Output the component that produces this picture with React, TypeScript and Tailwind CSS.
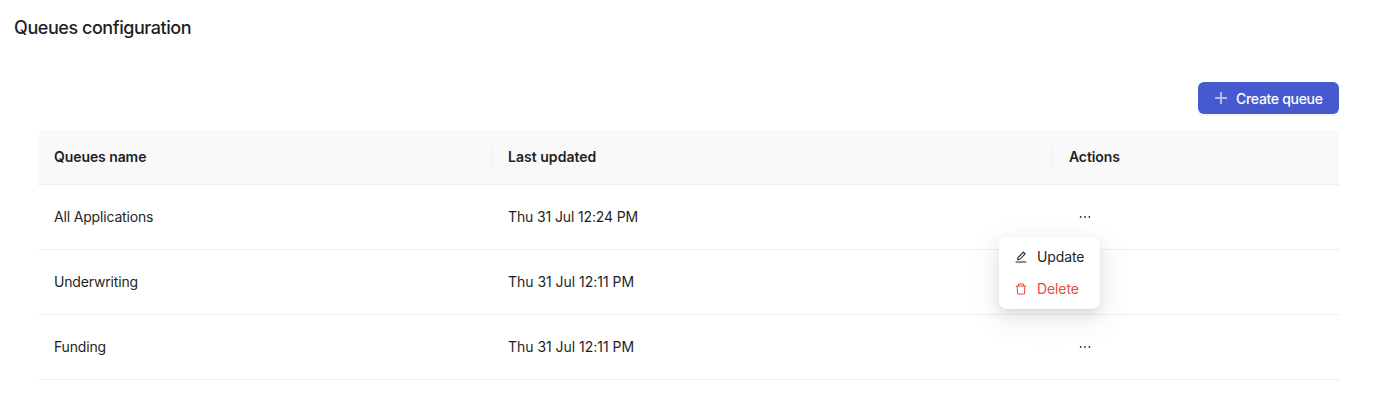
import { AiOutlineDelete, AiOutlineEdit, AiOutlineEllipsis } from "react-icons/ai";

const rows = [
  { name: "All Applications", updated: "Thu 31 Jul 12:24 PM", spacing: "tracking-[-0.13px]" },
  { name: "Underwriting", updated: "Thu 31 Jul 12:11 PM", spacing: "tracking-[-0.03px]" },
  { name: "Funding", updated: "Thu 31 Jul 12:11 PM", spacing: "tracking-[-0.03px]" },
];

function ActionsMenu() {
  return (
    <div className="absolute left-[-54px] top-[52px] z-10 w-[101px] rounded-lg bg-white p-1 shadow-[0_6px_16px_0_rgba(0,0,0,0.08),0_3px_6px_-4px_rgba(0,0,0,0.12),0_9px_28px_8px_rgba(0,0,0,0.05)]">
      <button className="flex h-8 w-full items-center gap-[9px] px-[11px] tracking-[-0.1px] text-[#1f1f1f]">
        <AiOutlineEdit size={14} className="shrink-0" />
        Update
      </button>
      <button className="flex h-8 w-full items-center gap-[9px] px-[11px] tracking-[-0.1px] text-[#e84a40]">
        <AiOutlineDelete size={14} className="shrink-0" />
        Delete
      </button>
    </div>
  );
}

export default function App() {
  return (
    <main className="h-[410px] overflow-hidden bg-white font-['Inter',sans-serif] text-sm text-[#1f1f1f]">
      <h1 className="px-[14px] pt-[14px] text-lg leading-7 font-medium tracking-[-0.45px]">Queues configuration</h1>
      <div className="mt-10 pr-[37px] pl-[38px]">
        <div className="flex justify-end">
          <button className="flex h-8 w-[141px] items-center gap-[7px] rounded-md bg-[#4659cf] pl-[15px] text-white shadow-[0_2px_0_rgba(5,80,255,0.06)]">
            <svg width="16" height="16" viewBox="0 0 16 16" fill="none" className="shrink-0">
              <path d="M8 2v12M2 8h12" stroke="currentColor" strokeOpacity="0.58" strokeWidth="2" />
            </svg>
            <span className="pt-[2px] font-medium tracking-[-0.3px]">Create queue</span>
          </button>
        </div>
        <div className="mt-4">
          <div className="grid h-[55px] grid-cols-[454px_561px_1fr] items-center rounded-t-lg border-b border-[#eeeeee] bg-[#f9f9f9] font-semibold">
            <div className="flex h-[22px] items-center border-r border-[#eeeeee] pl-4 tracking-[-0.08px]">Queues name</div>
            <div className="flex h-[22px] items-center border-r border-[#eeeeee] pl-4 tracking-[0.03px]">Last updated</div>
            <div className="pl-4 tracking-[-0.1px]">Actions</div>
          </div>
          {rows.map((row, i) => (
            <div key={row.name} className="relative grid h-[65px] grid-cols-[454px_561px_1fr] items-center border-b border-[#eeeeee]">
              <div className="pl-4 tracking-[-0.17px]">{row.name}</div>
              <div className={`pl-4 ${row.spacing}`}>{row.updated}</div>
              <div className="relative flex h-full items-center pl-6">
                <AiOutlineEllipsis size={16} />
                {i === 0 && <ActionsMenu />}
              </div>
            </div>
          ))}
        </div>
      </div>
    </main>
  );
}
